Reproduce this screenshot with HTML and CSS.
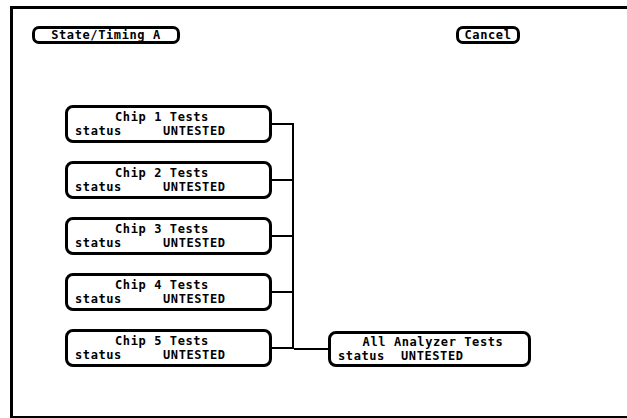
FILE: index.html
```html
<!DOCTYPE html>
<html lang="en">
<head>
  <meta charset="UTF-8" />
  <meta name="viewport" content="width=device-width, initial-scale=1.0"/>
  <title>Analyzer Self Tests</title>
  <link rel="stylesheet" href="styles.css">
</head>
<body>
  <div class="screen">
    <div class="topbar">
      <div class="key key-mode">State/Timing A</div>
      <div class="key key-cancel">Cancel</div>
    </div>

    <div class="tree">
      <div class="chips">
        <div class="chip-row">
          <div class="test-box">
            <div class="title">Chip 1 Tests</div>
            <div class="status"><span class="label">status</span><span>UNTESTED</span></div>
          </div>
          <div class="stub"></div>
        </div>
        <div class="chip-row">
          <div class="test-box">
            <div class="title">Chip 2 Tests</div>
            <div class="status"><span class="label">status</span><span>UNTESTED</span></div>
          </div>
          <div class="stub"></div>
        </div>
        <div class="chip-row">
          <div class="test-box">
            <div class="title">Chip 3 Tests</div>
            <div class="status"><span class="label">status</span><span>UNTESTED</span></div>
          </div>
          <div class="stub"></div>
        </div>
        <div class="chip-row">
          <div class="test-box">
            <div class="title">Chip 4 Tests</div>
            <div class="status"><span class="label">status</span><span>UNTESTED</span></div>
          </div>
          <div class="stub"></div>
        </div>
        <div class="chip-row">
          <div class="test-box">
            <div class="title">Chip 5 Tests</div>
            <div class="status"><span class="label">status</span><span>UNTESTED</span></div>
          </div>
          <div class="stub"></div>
        </div>
      </div>

      <div class="bus"></div>

      <div class="all-row">
        <div class="stub stub-long"></div>
        <div class="test-box test-box-all">
          <div class="title">All Analyzer Tests</div>
          <div class="status"><span class="label label-short">status</span><span>UNTESTED</span></div>
        </div>
      </div>
    </div>
  </div>
</body>
</html>
```

FILE: styles.css
```css
* {
  box-sizing: border-box;
  margin: 0;
  padding: 0;
}

body {
  font-family: 'DejaVu Sans Mono', 'Liberation Mono', monospace;
  font-weight: bold;
  font-size: 12px;
  letter-spacing: 0.6px;
  color: #000;
  background: #fff;
  width: 627px;
  height: 418px;
  overflow: hidden;
}

.screen {
  margin: 6px 0 0 10px;
  height: 412px;
  border-top: 3px solid #000;
  border-left: 3px solid #000;
  border-bottom: 2px solid #000;
  padding: 17px 0 0 19px;
}

/* softkeys along the top */
.topbar {
  display: flex;
  justify-content: space-between;
  width: 488px;
}

.key {
  height: 18px;
  border: 3px solid #000;
  border-radius: 7px;
  line-height: 12px;
  text-align: center;
}

.key-mode {
  width: 148px;
}

.key-cancel {
  width: 64px;
}

/* test tree */
.tree {
  display: flex;
  align-items: flex-end;
  margin-top: 61px;
  padding-left: 33px;
}

.chips {
  display: flex;
  flex-direction: column;
  gap: 18px;
}

.chip-row,
.all-row {
  display: flex;
  align-items: center;
}

.test-box {
  width: 207px;
  height: 38px;
  border: 3px solid #000;
  border-radius: 8px;
  padding: 2px 0 0 7px;
  line-height: 14px;
}

.test-box-all {
  width: 203px;
  height: 36px;
  padding-top: 1px;
}

.title {
  text-align: center;
  padding-right: 20px;
}

.test-box-all .title {
  padding-right: 0;
}

.status {
  display: flex;
}

.label {
  width: 88px;
}

.label-short {
  width: 63px;
}

.stub {
  width: 20px;
  height: 2px;
  background: #000;
}

.stub-long {
  width: 34px;
}

.bus {
  align-self: stretch;
  width: 2px;
  margin: 18px 0 18px;
  background: #000;
}
```
